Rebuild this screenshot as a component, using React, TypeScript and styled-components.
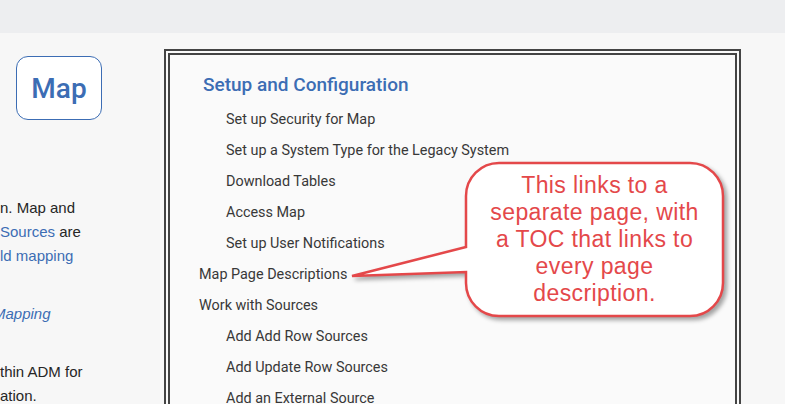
import React from "react";
import styled, { createGlobalStyle } from "styled-components";

const GlobalStyle = createGlobalStyle`
  html, body {
    margin: 0;
    padding: 0;
    overflow: hidden;
    background: #f7f7f7;
  }
`;

const Page = styled.div`
  position: relative;
  width: 785px;
  height: 404px;
  overflow: hidden;
  background: #f7f7f7;
`;

const TopBar = styled.div`
  height: 33px;
  background: #edeef0;
`;

const Main = styled.div`
  display: flex;
  align-items: flex-start;
`;

const SideColumn = styled.div`
  width: 164px;
  flex-shrink: 0;
  padding-top: 23px;
  font-family: "Liberation Sans", Arial, sans-serif;
  font-size: 15px;
  color: #262626;
`;

const MapButton = styled.div`
  margin-left: 16px;
  width: 84px;
  height: 62px;
  border: 1px solid #3c6db4;
  border-radius: 12px;
  background: #fff;
  display: flex;
  align-items: center;
  justify-content: center;
  font-family: Roboto, sans-serif;
  font-weight: 500;
  font-size: 28px;
  color: #3c6db4;
`;

const Para = styled.div<{ $top: number }>`
  margin-top: ${(p) => p.$top}px;
  line-height: 24px;
`;

const Line = styled.div`
  white-space: nowrap;
`;

const Link = styled.span<{ $italic?: boolean; $shift?: number }>`
  color: #3c6db4;
  font-style: ${(p) => (p.$italic ? "italic" : "normal")};
  display: inline-block;
  margin-left: ${(p) => p.$shift ?? 0}px;
`;

const TocBox = styled.div`
  margin-top: 16px;
  width: 536px;
  height: 400px;
  border: 6px double #444;
  background: #fafafa;
  padding: 15px 0 0 29px;
  font-family: Roboto, sans-serif;
`;

const TocHeading = styled.div`
  margin-left: 4px;
  margin-bottom: 4px;
  font-size: 19px;
  font-weight: 500;
  line-height: 30px;
  color: #3c6db4;
`;

const TocList = styled.ul`
  list-style: none;
  margin: 0;
  padding: 0;
`;

const TocItem = styled.li<{ $level: number }>`
  padding-left: ${(p) => (p.$level - 1) * 27}px;
  font-size: 14.4px;
  font-weight: 400;
  line-height: 31px;
  color: #383838;
  white-space: nowrap;
`;

const Callout = styled.div`
  position: absolute;
  left: 345px;
  top: 155px;
  width: 395px;
  height: 175px;
`;

const CalloutShape = styled.svg`
  display: block;
  filter: drop-shadow(3px 3px 2px rgba(0, 0, 0, 0.35));
`;

const CalloutText = styled.div`
  position: absolute;
  left: 121px;
  top: 8px;
  width: 257px;
  height: 153px;
  display: flex;
  flex-direction: column;
  align-items: center;
  justify-content: center;
  text-align: center;
  font-family: "Liberation Sans", Arial, sans-serif;
  font-size: 23px;
  letter-spacing: 0.4px;
  line-height: 27px;
  color: #e4484a;
`;

const tocItems: { level: number; label: string }[] = [
  { level: 2, label: "Set up Security for Map" },
  { level: 2, label: "Set up a System Type for the Legacy System" },
  { level: 2, label: "Download Tables" },
  { level: 2, label: "Access Map" },
  { level: 2, label: "Set up User Notifications" },
  { level: 1, label: "Map Page Descriptions" },
  { level: 1, label: "Work with Sources" },
  { level: 2, label: "Add Add Row Sources" },
  { level: 2, label: "Add Update Row Sources" },
  { level: 2, label: "Add an External Source" },
];

const calloutLines = [
  "This links to a",
  "separate page, with",
  "a TOC that links to",
  "every page",
  "description.",
];

const App: React.FC = () => {
  return (
    <Page>
      <GlobalStyle />
      <TopBar />
      <Main>
        <SideColumn>
          <MapButton>Map</MapButton>
          <Para $top={76}>
            <Line>n. Map and</Line>
            <Line>
              <Link>Sources</Link> are
            </Line>
            <Line>
              <Link>ld mapping</Link>
            </Line>
          </Para>
          <Para $top={34}>
            <Line>
              <Link $italic $shift={-7}>
                Mapping
              </Link>
            </Line>
          </Para>
          <Para $top={34}>
            <Line>thin ADM for</Line>
            <Line>ation.</Line>
          </Para>
        </SideColumn>
        <TocBox>
          <TocHeading>Setup and Configuration</TocHeading>
          <TocList>
            {tocItems.map((item) => (
              <TocItem key={item.label} $level={item.level}>
                {item.label}
              </TocItem>
            ))}
          </TocList>
        </TocBox>
      </Main>
      <Callout>
        <CalloutShape width="395" height="175" viewBox="0 0 395 175">
          <path
            d="M 154 8 H 345 A 33 33 0 0 1 378 41 V 128 A 33 33 0 0 1 345 161 H 154 A 33 33 0 0 1 121 128 V 117 L 7 121 L 121 92 V 41 A 33 33 0 0 1 154 8 Z"
            fill="#fff"
            stroke="#e4484a"
            strokeWidth="2.5"
            strokeLinejoin="miter"
          />
        </CalloutShape>
        <CalloutText>
          {calloutLines.map((line) => (
            <div key={line}>{line}</div>
          ))}
        </CalloutText>
      </Callout>
    </Page>
  );
};

export default App;
